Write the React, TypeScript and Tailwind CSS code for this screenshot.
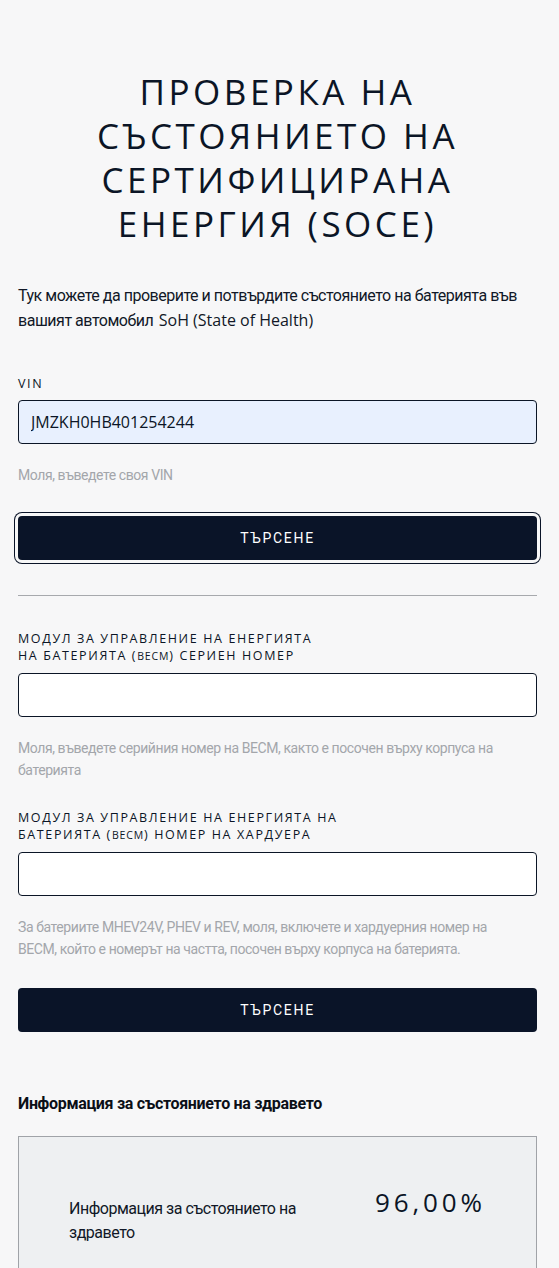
import { useState } from "react";

const heading = "font-['Open_Sans',sans-serif]";
const body = "font-['Roboto','Liberation_Sans',sans-serif]";

function Field({
    label,
    hint,
    value,
    filled,
}: {
    label: React.ReactNode;
    hint: string;
    value?: string;
    filled?: boolean;
}) {
    const [v, setV] = useState(value ?? "");
    return (
        <div>
            <label className={`${heading} block text-[12.5px] leading-[17px] tracking-[0.13em] uppercase text-[#0b1526]`}>
                {label}
            </label>
            <input
                value={v}
                onChange={(e) => setV(e.target.value)}
                className={`${heading} mt-[8px] block w-full h-[44px] rounded-[4px] border border-[#0b1526] px-3 text-[16px] text-[#0b1526] outline-none ${
                    filled ? "bg-[#e8f0fe]" : "bg-white"
                }`}
            />
            <p className={`${body} mt-[20px] pr-[24px] text-[14px] leading-[22px] tracking-[-0.03em] text-[#a3a6ab]`}>{hint}</p>
        </div>
    );
}

function SearchButton({ focused }: { focused?: boolean }) {
    return (
        <button
            className={`${body} w-full h-[44px] rounded-[4px] bg-[#0a1428] text-white text-[14px] tracking-[0.12em] ${
                focused ? "ring-1 ring-[#0a1428] ring-offset-[3px] ring-offset-[#f7f7f7]" : ""
            }`}
        >
            ТЪРСЕНЕ
        </button>
    );
}

export default function App() {
    return (
        <div className="min-h-[1268px] bg-[#f7f7f8] pl-[18px] pr-[22px] pt-[70px] pb-10 text-[#0b1526]">
            {/* Header */}
            <h1 className={`${heading} text-center text-[35px] leading-[44px] tracking-[0.1em] uppercase font-normal px-4`}>
                Проверка на състоянието на сертифицирана енергия (SOCE)
            </h1>

            <p className={`${body} mt-[38px] text-[16px] leading-[24px] tracking-[-0.03em] text-[#111827]`}>
                Тук можете да проверите и потвърдите състоянието на батерията във вашият автомобил{" "}
                <span className={`${heading} inline-block ml-[2px] leading-[24px] tracking-normal`}>SoH (State of Health)</span>
            </p>

            <div className="mt-[42px]">
                <Field label="VIN" hint="Моля, въведете своя VIN" value="JMZKH0HB401254244" filled />
            </div>

            <div className="mt-[30px]">
                <SearchButton focused />
            </div>

            <hr className="mt-[35px] border-t border-[#a7a9ad]" />

            <div className="mt-[34px] space-y-[28px]">
                <Field
                    label={
                        <>
                            Модул за управление на енергията
                            <br />
                            на батерията (<span className="text-[10.5px] tracking-[0.08em]">BECM</span>) сериен номер
                        </>
                    }
                    hint="Моля, въведете серийния номер на BECM, както е посочен върху корпуса на батерията"
                />
                <Field
                    label={
                        <>
                            Модул за управление на енергията на
                            <br />
                            батерията (<span className="text-[10.5px] tracking-[0.08em]">BECM</span>) номер на хардуера
                        </>
                    }
                    hint="За батериите MHEV24V, PHEV и REV, моля, включете и хардуерния номер на BECM, който е номерът на частта, посочен върху корпуса на батерията."
                />
            </div>

            <div className="mt-[28px]">
                <SearchButton />
            </div>

            {/* Result */}
            <h2 className={`${body} mt-[60px] text-[16px] leading-[24px] tracking-[-0.02em] font-bold text-[#0b0f17]`}>
                Информация за състоянието на здравето
            </h2>

            <div className="mt-[20px] border border-[#a0a3a8] bg-[#eef0f2] px-[50px] pt-[60px] pb-[60px]">
                <div className="flex items-start justify-between">
                    <p className={`${body} max-w-[250px] text-[16px] leading-[24px] tracking-[-0.03em] text-[#111827]`}>
                        Информация за състоянието на здравето
                    </p>
                    <span className={`${heading} -mt-[10px] text-[26px] leading-[30px] tracking-[0.15em] text-[#0b1526]`}>
                        96,00%
                    </span>
                </div>
            </div>
        </div>
    );
}
